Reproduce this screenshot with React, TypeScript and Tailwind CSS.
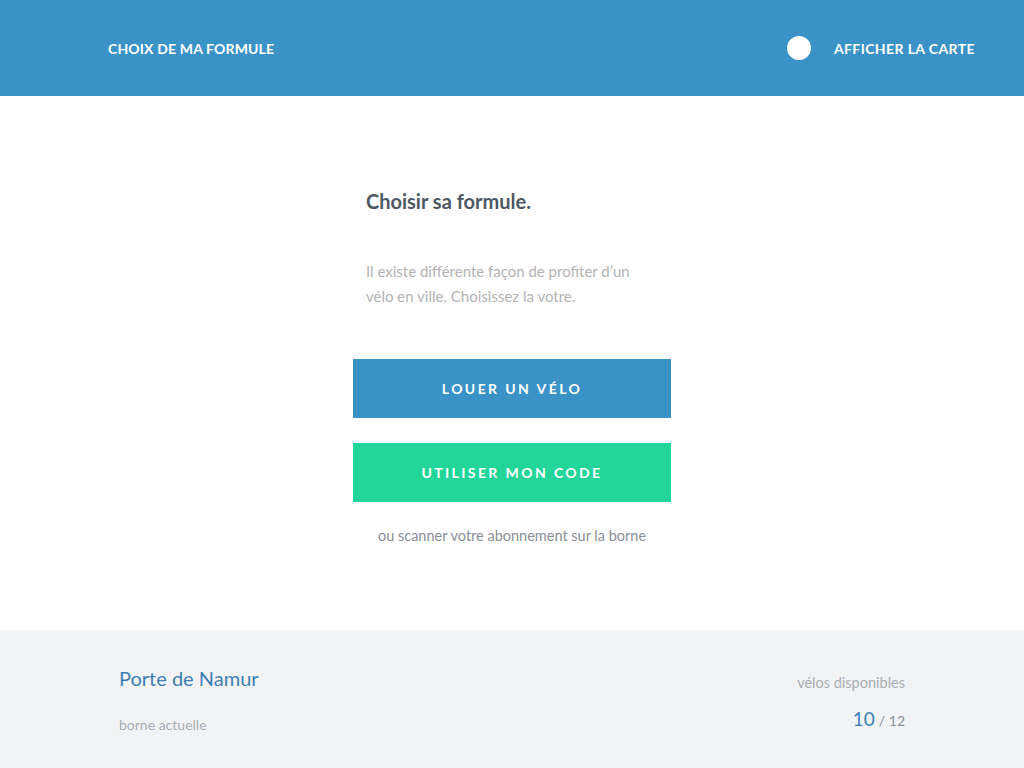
import React from "react";

export default function App() {
  return (
    <div className="w-[1024px] h-[768px] flex flex-col bg-white" style={{ fontFamily: "Lato, 'Noto Sans', sans-serif" }}>
      <header className="h-[96px] bg-[#3b92c7] flex items-center justify-between pl-[108px] pr-[49px] text-white">
        <div className="text-[14px] font-bold tracking-[0.15px]">CHOIX DE MA FORMULE</div>
        <div className="flex items-center gap-[23px]">
          <div className="w-[24px] h-[24px] rounded-full bg-white"></div>
          <div className="text-[14px] font-bold tracking-[0.4px]">AFFICHER LA CARTE</div>
        </div>
      </header>
      <main className="flex-1 flex justify-center">
        <div className="w-[318px] flex flex-col pt-[91px]">
          <h1 className="px-[13px] text-[20px] leading-[28px] font-bold text-[#4e5865]">Choisir sa formule.</h1>
          <p className="px-[13px] mt-[44px] text-[15px] leading-[25px] text-[#b3b3b3]">
            Il existe différente façon de profiter d’un<br />vélo en ville. Choisissez la votre.
          </p>
          <button className="mt-[50px] h-[59px] bg-[#3b92c7] text-white text-[14px] font-bold tracking-[2.4px]">LOUER UN VÉLO</button>
          <button className="mt-[25px] h-[59px] bg-[#22d69a] text-white text-[14px] font-bold tracking-[2.4px]">UTILISER MON CODE</button>
          <div className="mt-[25px] text-center text-[14.5px] leading-[18px] text-[#8a8f96]">ou scanner votre abonnement sur la borne</div>
        </div>
      </main>
      <footer className="h-[138px] bg-[#f2f3f5] flex justify-between pl-[119px] pr-[119px] pt-[35px]">
        <div className="flex flex-col">
          <div className="text-[20px] leading-[26px] text-[#3d7fb4]">Porte de Namur</div>
          <div className="mt-[25px] text-[14px] leading-[18px] text-[#a9adb3]">borne actuelle</div>
        </div>
        <div className="flex flex-col items-end pt-[9px]">
          <div className="text-[14.5px] leading-[18px] text-[#a9adb3]">vélos disponibles</div>
          <div className="mt-[15px] flex items-baseline gap-[4px]">
            <span className="text-[19px] leading-[24px] text-[#3d7fb4]">10</span>
            <span className="text-[14px] text-[#8a8f96]">/ 12</span>
          </div>
        </div>
      </footer>
    </div>
  );
}
